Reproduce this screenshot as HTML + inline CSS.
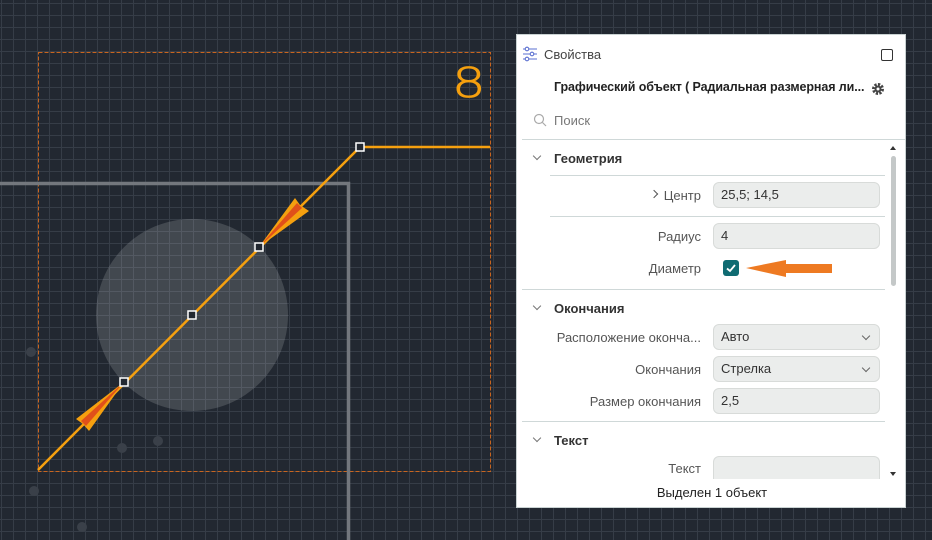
<!DOCTYPE html>
<html><head><meta charset="utf-8"><style>
body{margin:0;width:932px;height:540px;overflow:hidden;background:#222831;font-family:"Liberation Sans","Noto Sans CJK SC",sans-serif;position:relative}
.grid{position:absolute;inset:0;background-image:linear-gradient(to right,#363d47 1px,transparent 1px),linear-gradient(to bottom,#363d47 1px,transparent 1px);background-size:12px 12px;background-position:1px 3px}
.panel{position:absolute;left:516px;top:34px;width:390px;height:474px;background:#fff;border:1px solid #c9d2d2;box-sizing:border-box;font-size:13px;color:#333}
.abs{position:absolute}
.lbl{position:absolute;right:204px;color:#555;font-size:13px;text-align:right;white-space:nowrap}
.inp{position:absolute;left:196px;width:167px;height:26px;background:#ebedec;border:1px solid #d8dbd9;border-radius:6px;box-sizing:border-box;padding-left:7px;line-height:24px;font-size:13px;color:#333}
.sec{position:absolute;left:37px;font-weight:bold;font-size:13px;color:#333}
.chev{position:absolute;left:17px;width:5px;height:5px;border-right:1.2px solid #777;border-bottom:1.2px solid #777;transform:rotate(45deg)}
.dd{position:absolute;right:10px;top:8px;width:5px;height:5px;border-right:1.2px solid #666;border-bottom:1.2px solid #666;transform:rotate(45deg)}
.hr{position:absolute;height:1px;background:#cfd8d8}
</style></head><body>
<div class="grid"></div>
<svg class="abs" style="left:0;top:0" width="932" height="540">
<rect x="38.5" y="52.5" width="452" height="419" fill="none" stroke="#c8651f" stroke-width="1" stroke-dasharray="4,2"/>
<circle cx="192" cy="315" r="96" fill="#ffffff" fill-opacity="0.15"/>
<path d="M0 183.5 H348.5 V540" fill="none" stroke="#73777d" stroke-width="3.5"/>
<circle cx="31" cy="352" r="5" fill="#3a4049"/><circle cx="122" cy="448" r="5" fill="#3a4049"/><circle cx="158" cy="441" r="5" fill="#3a4049"/><circle cx="34" cy="491" r="5" fill="#3a4049"/><circle cx="82" cy="527" r="5" fill="#3a4049"/>
<path d="M38 470 L360 147 H490" fill="none" stroke="#f5a00f" stroke-width="2.5"/>
<polygon points="259,247 295,198 300,205 309,211" fill="#f5a00f"/>
<polygon points="259,247 297,203 302,208" fill="#e0501a"/>
<polygon points="124,382 76,419 83,424 89,431" fill="#f5a00f"/>
<polygon points="124,382 81,421 86,426" fill="#e0501a"/>
<g fill="#222831" stroke="#fff" stroke-width="1.5"><rect x="120" y="378" width="8" height="8"/><rect x="188" y="311" width="8" height="8"/><rect x="255" y="243" width="8" height="8"/><rect x="356" y="143" width="8" height="8"/></g>
<text x="0" y="0" font-family="DejaVu Sans" font-size="44" font-weight="200" fill="#f5a00f" stroke="#f5a00f" stroke-width="0.8" transform="translate(452,97) scale(1.2,0.93)">8</text>
</svg>
<div class="panel">
<svg class="abs" style="left:5px;top:11px" width="16" height="16" viewBox="0 0 16 16" fill="none" stroke="#5a6fd0" stroke-width="1.1"><path d="M1 3H15M1 8H15M1 13H15"/><circle cx="5" cy="3" r="1.8" fill="#fff"/><circle cx="10" cy="8" r="1.8" fill="#fff"/><circle cx="5" cy="13" r="1.8" fill="#fff"/></svg>
<div class="abs" style="left:27px;top:12px;color:#444">Свойства</div>
<div class="abs" style="left:364px;top:14px;width:10px;height:10px;border:1.3px solid #333;border-radius:2px"></div>
<div class="abs" style="left:37px;top:45px;font-weight:bold;color:#222;font-size:12.5px;white-space:nowrap;letter-spacing:-0.1px">Графический объект ( Радиальная размерная ли...</div>
<svg class="abs" style="left:354px;top:47px" width="14" height="14" viewBox="0 0 14 14"><circle cx="7" cy="7" r="4.5" fill="none" stroke="#444" stroke-width="3" stroke-dasharray="2.2,1.3"/><circle cx="7" cy="7" r="3.5" fill="#444"/><circle cx="7" cy="7" r="1.5" fill="#fff"/></svg>
<svg class="abs" style="left:16px;top:78px" width="14" height="14"><circle cx="6" cy="6" r="4.5" fill="none" stroke="#aaa" stroke-width="1.2"/><path d="M9.5 9.5L13 13" stroke="#aaa" stroke-width="1.2"/></svg>
<div class="abs" style="left:37px;top:78px;color:#777">Поиск</div>
<div class="hr" style="left:5px;right:0;top:104px"></div>
<div class="chev" style="top:118px"></div><div class="sec" style="top:116px">Геометрия</div>
<div class="hr" style="left:33px;width:335px;top:140px"></div>
<div class="abs" style="left:134px;top:156px;width:5px;height:5px;border-right:1.3px solid #555;border-top:1.3px solid #555;transform:rotate(45deg)"></div>
<div class="lbl" style="top:153px">Центр</div><div class="inp" style="top:147px">25,5; 14,5</div>
<div class="hr" style="left:33px;width:335px;top:181px"></div>
<div class="lbl" style="top:194px">Радиус</div><div class="inp" style="top:188px">4</div>
<div class="lbl" style="top:226px">Диаметр</div>
<div class="abs" style="left:206px;top:225px;width:16px;height:16px;background:#0f6b72;border-radius:3px"><svg width="16" height="16"><path d="M4 8.5L7 11L12 5" fill="none" stroke="#fff" stroke-width="1.8"/></svg></div>
<svg class="abs" style="left:228px;top:224px" width="90" height="20"><polygon points="1,9 41,1 41,5 87,5 87,14 41,14 41,18" fill="#ee7a22"/></svg>
<div class="hr" style="left:5px;width:363px;top:254px"></div>
<div class="chev" style="top:268px"></div><div class="sec" style="top:266px">Окончания</div>
<div class="lbl" style="top:295px">Расположение оконча...</div><div class="inp" style="top:289px">Авто<div class="dd"></div></div>
<div class="lbl" style="top:327px">Окончания</div><div class="inp" style="top:321px">Стрелка<div class="dd"></div></div>
<div class="lbl" style="top:359px">Размер окончания</div><div class="inp" style="top:353px">2,5</div>
<div class="hr" style="left:5px;width:363px;top:386px"></div>
<div class="chev" style="top:400px"></div><div class="sec" style="top:398px">Текст</div>
<div class="lbl" style="top:426px">Текст</div><div class="inp" style="top:421px;height:23px;border-bottom:none;border-radius:6px 6px 0 0"></div>
<div class="abs" style="left:374px;top:121px;width:5px;height:130px;background:#c4c8c8;border-radius:3px"></div>
<div class="abs" style="left:373px;top:111px;width:0;height:0;border-left:3.5px solid transparent;border-right:3.5px solid transparent;border-bottom:4px solid #333"></div>
<div class="abs" style="left:373px;top:437px;width:0;height:0;border-left:3.5px solid transparent;border-right:3.5px solid transparent;border-top:4px solid #333"></div>
<div class="abs" style="left:0;width:390px;top:450px;text-align:center;color:#222">Выделен 1 объект</div>
</div>
</body></html>
